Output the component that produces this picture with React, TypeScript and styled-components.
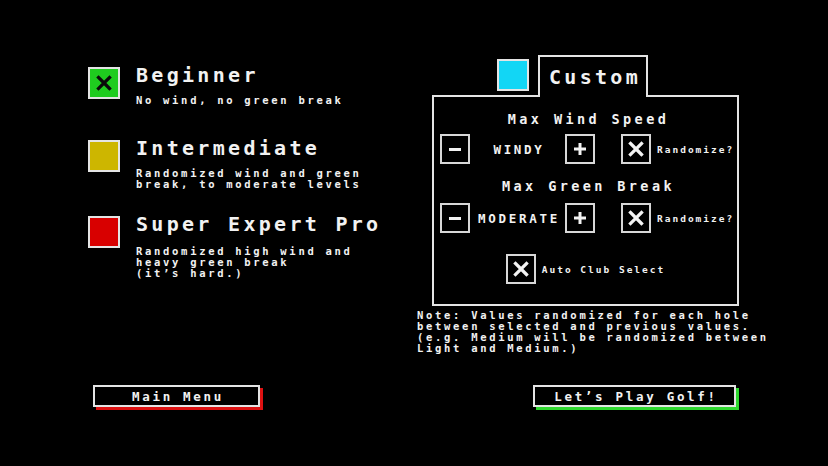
import React from 'react';
import styled, { createGlobalStyle } from 'styled-components';

const GlobalStyle = createGlobalStyle`
  html, body {
    margin: 0;
    padding: 0;
    background: #000;
  }
  body {
    font-family: "DejaVu Sans Mono", "Liberation Mono", monospace;
    font-weight: bold;
    color: #f2f2f2;
  }
`;

const Page = styled.div`
  width: 828px;
  height: 466px;
  display: flex;
  flex-direction: column;
  box-sizing: border-box;
  padding: 55px 0 59px 0;
  overflow: hidden;
`;

const Top = styled.div`
  display: flex;
  align-items: flex-start;
`;

const LeftColumn = styled.div`
  width: 329px;
  margin-left: 88px;
  padding-top: 12px;
  display: flex;
  flex-direction: column;
`;

const Option = styled.div<{ $h: number }>`
  display: flex;
  align-items: flex-start;
  gap: 16px;
  height: ${(p) => p.$h}px;
`;

const ColorBox = styled.div<{ $color: string }>`
  width: 28px;
  height: 28px;
  flex: none;
  background: ${(p) => p.$color};
  border: 2px solid #e4e4e4;
  display: flex;
  align-items: center;
  justify-content: center;
`;

const OptionText = styled.div`
  display: flex;
  flex-direction: column;
  margin-top: -2px;
`;

const Title = styled.div`
  font-size: 20px;
  line-height: 20px;
  letter-spacing: 3.3px;
  white-space: nowrap;
`;

const Desc = styled.div<{ $gap: number }>`
  margin-top: ${(p) => p.$gap}px;
  font-size: 10.5px;
  line-height: 11px;
  letter-spacing: 2.7px;
  white-space: pre;
`;

const RightColumn = styled.div`
  display: flex;
  flex-direction: column;
`;

const TabRow = styled.div`
  display: flex;
  align-items: center;
  gap: 9px;
  margin-left: 80px;
`;

const Tab = styled.div`
  position: relative;
  z-index: 1;
  width: 110px;
  height: 42px;
  margin-bottom: -2px;
  box-sizing: border-box;
  background: #000;
  border: 2px solid #e4e4e4;
  border-bottom: none;
  display: flex;
  align-items: center;
  justify-content: center;
  font-size: 20px;
  letter-spacing: 3.3px;
  padding-left: 4px;
`;

const Panel = styled.div`
  margin-left: 15px;
  width: 307px;
  box-sizing: border-box;
  border: 2px solid #e4e4e4;
  padding: 14px 0 20px 0;
  display: flex;
  flex-direction: column;
  align-items: center;
`;

const SectionLabel = styled.div<{ $gap: number }>`
  font-size: 13.5px;
  line-height: 16px;
  letter-spacing: 3.4px;
  margin-bottom: ${(p) => p.$gap}px;
  padding-left: 6px;
`;

const ControlRow = styled.div<{ $after: number }>`
  align-self: stretch;
  display: flex;
  align-items: center;
  padding-left: 6px;
  margin-bottom: ${(p) => p.$after}px;
`;

const SquareButton = styled.div`
  width: 26px;
  height: 26px;
  flex: none;
  border: 2px solid #d8d8d8;
  display: flex;
  align-items: center;
  justify-content: center;
`;

const Value = styled.div`
  width: 95px;
  text-align: center;
  font-size: 12.5px;
  letter-spacing: 2.7px;
  padding-left: 3px;
  box-sizing: border-box;
`;

const Small = styled.div`
  font-size: 9.5px;
  letter-spacing: 2px;
  margin-left: 6px;
  white-space: nowrap;
`;

const Spacer = styled.div<{ $w: number }>`
  width: ${(p) => p.$w}px;
  flex: none;
`;

const AutoRow = styled.div`
  display: flex;
  align-items: center;
`;

const Note = styled.div`
  margin-top: 4px;
  font-size: 10.5px;
  line-height: 11px;
  letter-spacing: 2.7px;
  white-space: pre;
`;

const Bottom = styled.div`
  margin-top: auto;
  display: flex;
  align-items: flex-start;
`;

const MenuButton = styled.div<{ $shadow: string; $w: number; $left: number }>`
  width: ${(p) => p.$w}px;
  height: 22px;
  margin-left: ${(p) => p.$left}px;
  box-sizing: border-box;
  border: 2px solid #e4e4e4;
  background: #000;
  box-shadow: 3px 3px 0 ${(p) => p.$shadow};
  display: flex;
  align-items: center;
  justify-content: center;
  font-size: 12.5px;
  letter-spacing: 2.7px;
  padding-left: 3px;
`;

const Cross = ({ color = '#f4f4f4', size = 16 }: { color?: string; size?: number }) => (
  <svg width={size} height={size} viewBox="0 0 16 16">
    <path d="M2.5 2.5 L13.5 13.5 M13.5 2.5 L2.5 13.5" stroke={color} strokeWidth="3.2" strokeLinecap="square" />
  </svg>
);

const Minus = () => (
  <svg width="14" height="14" viewBox="0 0 14 14">
    <rect x="1" y="6" width="12" height="3" fill="#f2f2f2" />
  </svg>
);

const Plus = () => (
  <svg width="14" height="14" viewBox="0 0 14 14">
    <rect x="1" y="5.5" width="12" height="3" fill="#f2f2f2" />
    <rect x="5.5" y="1" width="3" height="12" fill="#f2f2f2" />
  </svg>
);

const options = [
  { title: 'Beginner', desc: 'No wind, no green break', color: '#1fcc1f', checked: true, h: 73, gap: 10 },
  { title: 'Intermediate', desc: 'Randomized wind and green\nbreak, to moderate levels', color: '#cdb600', checked: false, h: 76, gap: 10 },
  { title: 'Super Expert Pro', desc: 'Randomized high wind and\nheavy green break\n(it\u2019s hard.)', color: '#d80000', checked: false, h: 80, gap: 12 },
];

export default function App() {
  return (
    <Page>
      <GlobalStyle />
      <Top>
        <LeftColumn>
          {options.map((o) => (
            <Option key={o.title} $h={o.h}>
              <ColorBox $color={o.color}>{o.checked && <Cross color="#0a0a0a" size={16} />}</ColorBox>
              <OptionText>
                <Title>{o.title}</Title>
                <Desc $gap={o.gap}>{o.desc}</Desc>
              </OptionText>
            </Option>
          ))}
        </LeftColumn>
        <RightColumn>
          <TabRow>
            <ColorBox $color="#12d6f5" />
            <Tab>Custom</Tab>
          </TabRow>
          <Panel>
            <SectionLabel $gap={7}>Max Wind Speed</SectionLabel>
            <ControlRow $after={14}>
              <SquareButton><Minus /></SquareButton>
              <Value>WINDY</Value>
              <SquareButton><Plus /></SquareButton>
              <Spacer $w={26} />
              <SquareButton><Cross /></SquareButton>
              <Small>Randomize?</Small>
            </ControlRow>
            <SectionLabel $gap={9}>Max Green Break</SectionLabel>
            <ControlRow $after={21}>
              <SquareButton><Minus /></SquareButton>
              <Value>MODERATE</Value>
              <SquareButton><Plus /></SquareButton>
              <Spacer $w={26} />
              <SquareButton><Cross /></SquareButton>
              <Small>Randomize?</Small>
            </ControlRow>
            <AutoRow>
              <SquareButton><Cross /></SquareButton>
              <Small>Auto Club Select</Small>
            </AutoRow>
          </Panel>
          <Note>{'Note: Values randomized for each hole\nbetween selected and previous values.\n(e.g. Medium will be randomized between\nLight and Medium.)'}</Note>
        </RightColumn>
      </Top>
      <Bottom>
        <MenuButton $shadow="#dd1111" $w={167} $left={93}>Main Menu</MenuButton>
        <MenuButton $shadow="#2fd82f" $w={203} $left={273}>Let&rsquo;s Play Golf!</MenuButton>
      </Bottom>
    </Page>
  );
}
